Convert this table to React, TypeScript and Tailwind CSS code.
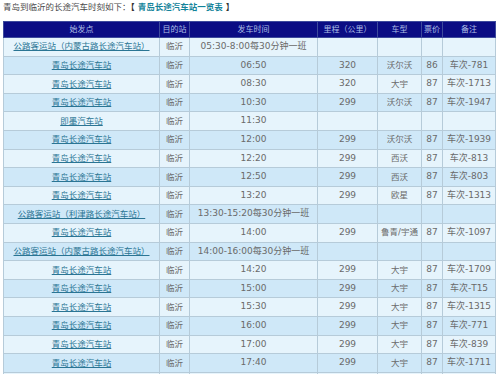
import React from 'react';

type Row = {
  from: string;
  time: string;
  km?: string;
  bus?: string;
  price?: string;
  note?: string;
};

const rows: Row[] = [
  { from: '公路客运站（内蒙古路长途汽车站）', time: '05:30-8:00每30分钟一班' },
  { from: '青岛长途汽车站', time: '06:50', km: '320', bus: '沃尔沃', price: '86', note: '车次-781' },
  { from: '青岛长途汽车站', time: '08:30', km: '320', bus: '大宇', price: '87', note: '车次-1713' },
  { from: '青岛长途汽车站', time: '10:30', km: '299', bus: '沃尔沃', price: '87', note: '车次-1947' },
  { from: '即墨汽车站', time: '11:30' },
  { from: '青岛长途汽车站', time: '12:00', km: '299', bus: '沃尔沃', price: '87', note: '车次-1939' },
  { from: '青岛长途汽车站', time: '12:20', km: '299', bus: '西沃', price: '87', note: '车次-813' },
  { from: '青岛长途汽车站', time: '12:50', km: '299', bus: '西沃', price: '87', note: '车次-803' },
  { from: '青岛长途汽车站', time: '13:20', km: '299', bus: '欧星', price: '87', note: '车次-1313' },
  { from: '公路客运站（利津路长途汽车站）', time: '13:30-15:20每30分钟一班' },
  { from: '青岛长途汽车站', time: '14:00', km: '299', bus: '鲁青/宇通', price: '87', note: '车次-1097' },
  { from: '公路客运站（内蒙古路长途汽车站）', time: '14:00-16:00每30分钟一班' },
  { from: '青岛长途汽车站', time: '14:20', km: '299', bus: '大宇', price: '87', note: '车次-1709' },
  { from: '青岛长途汽车站', time: '15:00', km: '299', bus: '大宇', price: '87', note: '车次-T15' },
  { from: '青岛长途汽车站', time: '15:30', km: '299', bus: '大宇', price: '87', note: '车次-1315' },
  { from: '青岛长途汽车站', time: '16:00', km: '299', bus: '大宇', price: '87', note: '车次-771' },
  { from: '青岛长途汽车站', time: '17:00', km: '299', bus: '大宇', price: '87', note: '车次-839' },
  { from: '青岛长途汽车站', time: '17:40', km: '299', bus: '大宇', price: '87', note: '车次-1711' },
];

const headers = ['始发点', '目的站', '发车时间', '里程（公里）', '车型', '票价', '备注'];
const widths = ['w-[156px]', 'w-[30px]', 'w-[128px]', 'w-[60px]', 'w-[44px]', 'w-[21px]', 'w-[53px]'];
const cell = 'border border-[#b6cbd9] p-0 text-center whitespace-nowrap';

export default function App() {
  return (
    <div className="w-[499px] h-[374px] overflow-hidden bg-white px-[3px] pt-[1px] text-[9px] text-[#6a6a6a] [font-family:'DejaVu_Sans','Noto_Sans_CJK_SC',sans-serif]">
      <div className="h-[12px] leading-[12px] text-[#4a4a4a] text-[8.5px]">
        青岛到临沂的长途汽车时刻如下：<b className="text-[#333]">【 </b>
        <a className="font-bold text-[#13839a]">青岛长途汽车站一览表</a>
        <b className="text-[#333]"> 】</b>
      </div>
      <table className="mt-[8px] w-[492px] table-fixed border-collapse">
        <colgroup>
          {widths.map((w, i) => (
            <col key={i} className={w} />
          ))}
        </colgroup>
        <thead>
          <tr className="h-[16px] bg-[#0b0d84]">
            {headers.map((h) => (
              <th
                key={h}
                className="border border-[#3d4a9c] p-0 text-center text-[8px] font-normal text-[#aebfe6] leading-none whitespace-nowrap"
              >
                {h}
              </th>
            ))}
          </tr>
        </thead>
        <tbody>
          {rows.map((r, i) => (
            <tr key={i} className={`h-[18.6px] ${i % 2 === 0 ? 'bg-[#e6f4fc]' : 'bg-[#cfe8f8]'}`}>
              <td className={`${cell} text-[8.5px]`}>
                <a className="text-[#2a7594] underline">{r.from}</a>
              </td>
              <td className={`${cell} text-[8.5px]`}>临沂</td>
              <td className={cell}>{r.time}</td>
              <td className={cell}>{r.km}</td>
              <td className={`${cell} text-[8.5px]`}>{r.bus}</td>
              <td className={cell}>{r.price}</td>
              <td className={cell}>{r.note}</td>
            </tr>
          ))}
          <tr className="h-[18.6px] bg-[#e6f4fc]">
            {widths.map((_, i) => (
              <td key={i} className={cell} />
            ))}
          </tr>
        </tbody>
      </table>
    </div>
  );
}
